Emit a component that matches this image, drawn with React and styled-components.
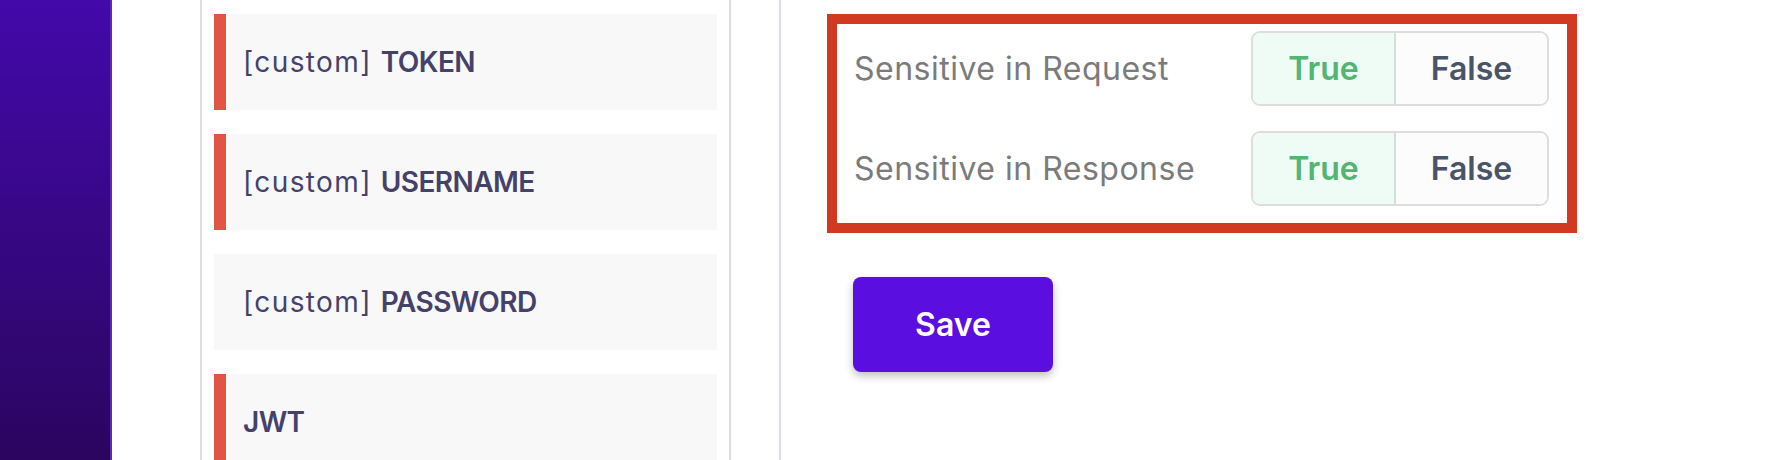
import React from 'react';
import styled, { createGlobalStyle } from 'styled-components';

const GlobalStyle = createGlobalStyle`
  html, body {
    margin: 0;
    padding: 0;
    height: 460px;
    overflow: hidden;
    background: #fff;
    font-family: 'Inter', 'Liberation Sans', sans-serif;
  }
`;

const Page = styled.div`
  display: flex;
  height: 460px;
  overflow: hidden;
`;

const Sidebar = styled.aside`
  width: 110px;
  flex-shrink: 0;
  background: linear-gradient(180deg, #4309aa 0%, #2b055f 100%);
  border-right: 2px solid #5a2ab4;
`;

const Gutter = styled.div`
  width: 88px;
  flex-shrink: 0;
`;

const ListPanel = styled.section`
  width: 503px;
  flex-shrink: 0;
  padding: 14px 12px;
  border-left: 2px solid #dcdce4;
  border-right: 2px solid #dcdce4;
  display: flex;
  flex-direction: column;
  gap: 24px;
`;

const Item = styled.div`
  height: 96px;
  flex-shrink: 0;
  display: flex;
  align-items: center;
  box-sizing: border-box;
  padding-left: 17px;
  background: #f8f8f9;
  border-left: 12px solid ${(p) => (p.$flagged ? '#e05543' : 'transparent')};
  color: #454269;
  font-size: 28px;
`;

const Prefix = styled.span`
  font-weight: 400;
  letter-spacing: 1.4px;
  margin-right: 9px;
`;

const Name = styled.span`
  font-weight: 600;
  letter-spacing: -0.6px;
`;

const Divider = styled.div`
  width: 48px;
  flex-shrink: 0;
  border-right: 2px solid #dcdce4;
`;

const Content = styled.main`
  flex: 1;
  padding: 14px 0 0 46px;
  display: flex;
  flex-direction: column;
  align-items: flex-start;
`;

const Highlight = styled.div`
  box-sizing: border-box;
  width: 750px;
  border: 10px solid #d13a20;
  padding: 7px 18px 17px 17px;
  display: flex;
  flex-direction: column;
  gap: 25px;
`;

const Row = styled.div`
  display: flex;
  align-items: center;
  justify-content: space-between;
`;

const Label = styled.span`
  font-size: 32px;
  color: #7b7b7b;
  letter-spacing: 0.5px;
`;

const Toggle = styled.div`
  display: flex;
  height: 75px;
  box-sizing: border-box;
  border: 2px solid #dcdedc;
  border-radius: 9px;
  overflow: hidden;
`;

const Option = styled.button`
  border: none;
  margin: 0;
  padding: 0;
  width: ${(p) => p.$width}px;
  text-align: center;
  font-family: inherit;
  font-size: 32px;
  font-weight: 600;
  cursor: pointer;
  background: ${(p) => (p.$active ? '#eefcf5' : '#fcfcfc')};
  color: ${(p) => (p.$active ? '#52b574' : '#4a5468')};
  & + & {
    border-left: 2px solid #d3e0d8;
  }
`;

const SaveButton = styled.button`
  margin: 44px 0 0 26px;
  width: 200px;
  height: 95px;
  border: none;
  border-radius: 8px;
  background: #5a0fe0;
  color: #fff;
  font-family: inherit;
  font-size: 32px;
  font-weight: 600;
  box-shadow: 0 4px 8px rgba(0, 0, 0, 0.25);
  cursor: pointer;
`;

const items = [
  { prefix: '[custom]', name: 'TOKEN', flagged: true },
  { prefix: '[custom]', name: 'USERNAME', flagged: true },
  { prefix: '[custom]', name: 'PASSWORD', flagged: false },
  { prefix: null, name: 'JWT', flagged: true },
];

const settings = ['Sensitive in Request', 'Sensitive in Response'];

const App = () => {
  return (
    <>
      <GlobalStyle />
      <Page>
        <Sidebar />
        <Gutter />
        <ListPanel>
          {items.map((it) => (
            <Item key={it.name} $flagged={it.flagged}>
              {it.prefix && <Prefix>{it.prefix}</Prefix>}
              <Name>{it.name}</Name>
            </Item>
          ))}
        </ListPanel>
        <Divider />
        <Content>
          <Highlight>
            {settings.map((s) => (
              <Row key={s}>
                <Label>{s}</Label>
                <Toggle>
                  <Option $active $width={141}>True</Option>
                  <Option $width={153}>False</Option>
                </Toggle>
              </Row>
            ))}
          </Highlight>
          <SaveButton>Save</SaveButton>
        </Content>
      </Page>
    </>
  );
};

export default App;
